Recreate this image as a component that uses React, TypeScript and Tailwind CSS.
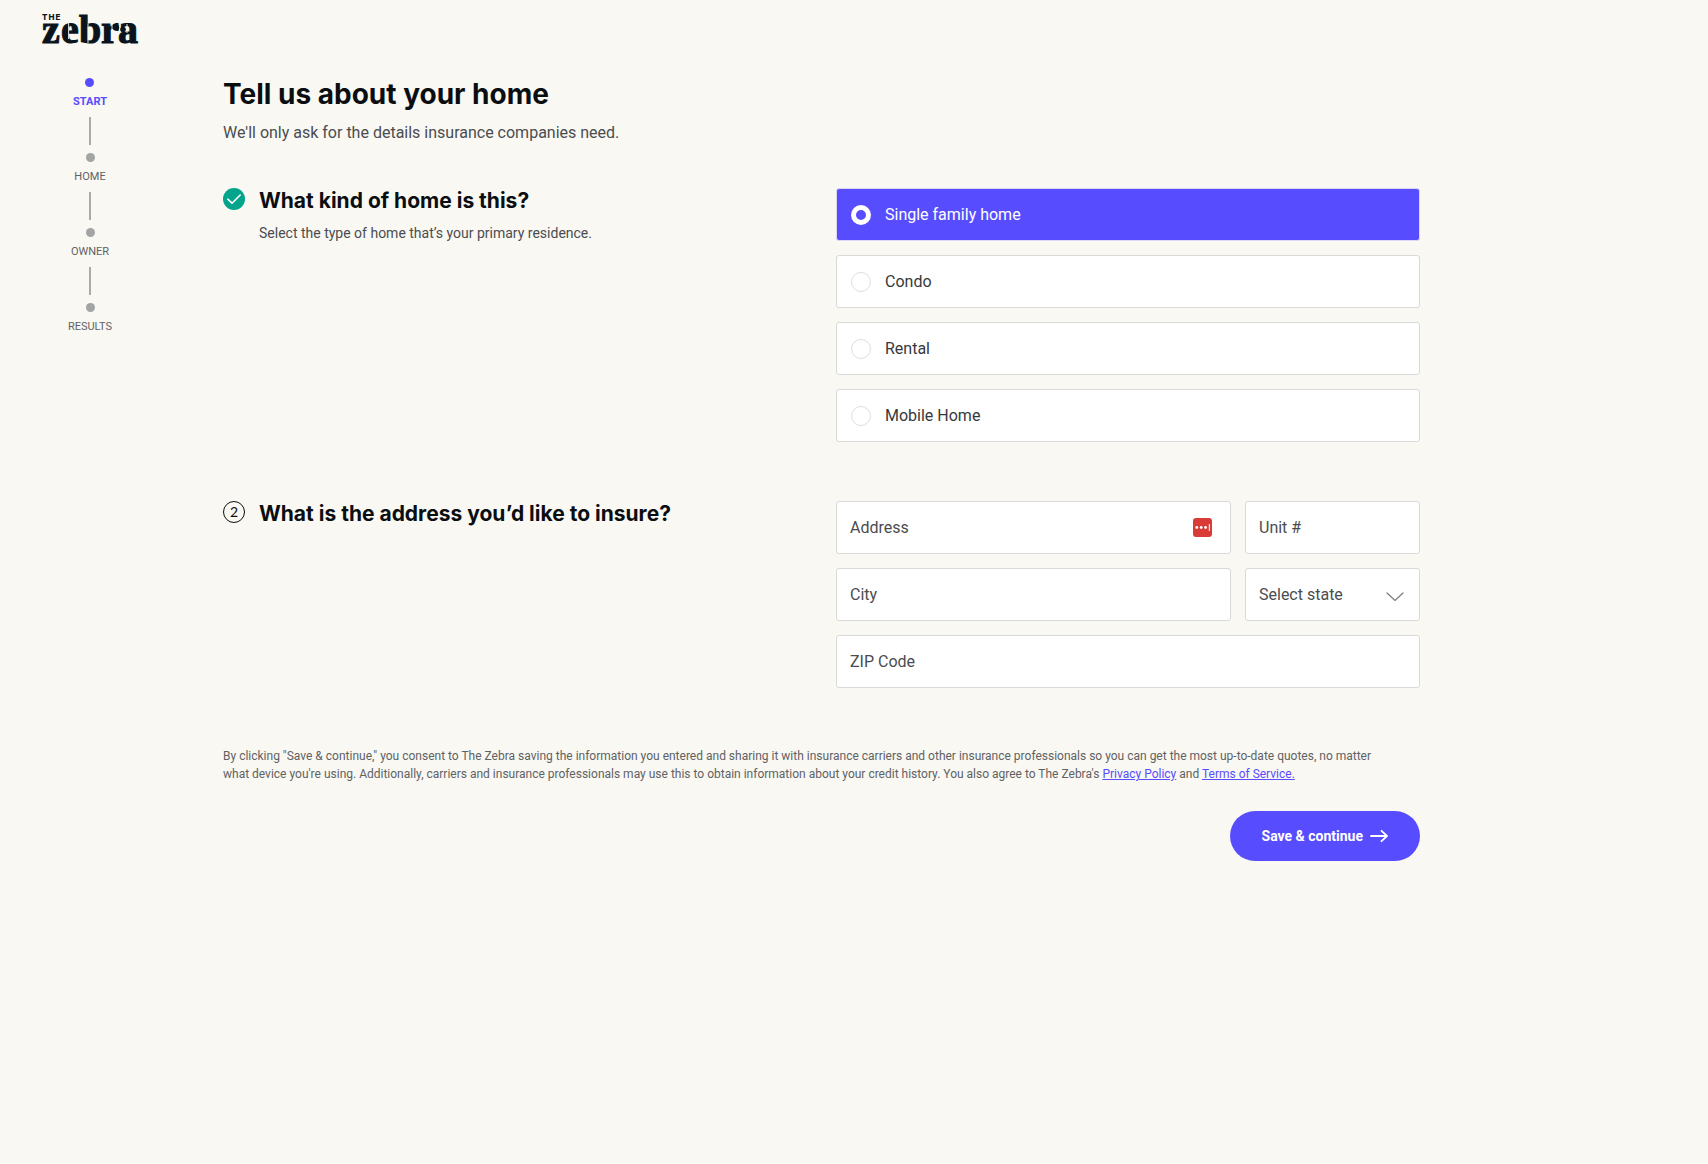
import React, { useState } from 'react';

const steps = ['Start', 'Home', 'Owner', 'Results'];

const homeTypes = ['Single family home', 'Condo', 'Rental', 'Mobile Home'];

const fieldClass =
  'h-[53px] w-full rounded-[3px] border border-[#d9dad8] bg-white px-[13px] text-base text-[#4a4d50] placeholder:text-[#4a4d50] placeholder:opacity-100 focus:outline-none focus:border-[#574dff]';

const Logo: React.FC = () => (
  <svg
    width="98"
    height="34"
    viewBox="0 0 98 34"
    role="img"
    aria-label="The Zebra"
    fill="#0b141c"
    className="overflow-visible"
  >
    <text x="1" y="8" fontFamily="Inter, sans-serif" fontWeight="800" fontSize="8" letterSpacing="1">
      THE
    </text>
    <text
      x="1 20 38 60 77"
      y="31"
      fontFamily="'Liberation Serif', serif"
      fontWeight="700"
      fontSize="40"
      stroke="#0b141c"
      strokeWidth="1.1"
    >
      zebra
    </text>
    <circle cx="75" cy="15.5" r="3.2" />
    <circle cx="82" cy="17.5" r="2.8" />
    <g stroke="#f9f8f3" strokeWidth="0.9">
      <path d="M27.6 11 V27" />
      <path d="M47 12 V31" />
      <path d="M71 12 V20" />
      <path d="M86 12 V21" />
    </g>
  </svg>
);

const Stepper: React.FC = () => (
  <nav aria-label="Progress" className="w-[180px] shrink-0 pt-[18px]">
    <ol className="flex flex-col items-center gap-2">
      {steps.map((step, i) => (
        <li key={step} className="flex flex-col items-center gap-2">
          {i > 0 && <span className="h-7 w-[2px] bg-[#a9abab]" />}
          <span className={`size-[9px] rounded-full ${i === 0 ? 'bg-[#574dff]' : 'bg-[#a3a5a5]'}`} />
          <span
            className={`text-[11px] leading-[14px] uppercase ${
              i === 0 ? 'font-bold text-[#574dff]' : 'text-[#5f6264]'
            }`}
          >
            {step}
          </span>
        </li>
      ))}
    </ol>
  </nav>
);

const CheckBadge: React.FC = () => (
  <svg width="22" height="22" viewBox="0 0 22 22" className="shrink-0" aria-hidden="true">
    <circle cx="11" cy="11" r="11" fill="#02a58b" />
    <path
      d="M4.8 11.2 L9 15.2 L17.2 7"
      fill="none"
      stroke="#fff"
      strokeWidth="1.6"
      strokeLinecap="round"
      strokeLinejoin="round"
    />
  </svg>
);

type QuestionProps = {
  badge: React.ReactNode;
  title: string;
  hint?: string;
  children: React.ReactNode;
};

const Question: React.FC<QuestionProps> = ({ badge, title, hint, children }) => (
  <section className="mb-[59px] grid gap-y-6 lg:grid-cols-[minmax(0,613fr)_minmax(0,584fr)]">
    <div className="flex items-start gap-[14px]">
      {badge}
      <div>
        <h2 className="font-['Inter',sans-serif] text-[21px] leading-[26px] font-bold text-[#0b0e11]">{title}</h2>
        {hint && <p className="mt-2 text-sm leading-[22px] text-[#4a4d50]">{hint}</p>}
      </div>
    </div>
    {children}
  </section>
);

const App: React.FC = () => {
  const [homeType, setHomeType] = useState(homeTypes[0]);

  return (
    <div className="min-h-screen bg-[#f9f8f3] font-['Roboto',sans-serif] text-[#4a4d50]">
      <header className="flex h-[60px] items-start px-[41px] pt-3">
        <a href="#">
          <Logo />
        </a>
      </header>

      <div className="flex">
        <Stepper />

        <main className="ml-[43px] mr-6 w-full max-w-[1197px] pt-4">
          <h1 className="font-['Inter',sans-serif] text-[28px] leading-9 font-bold text-[#0b0e11]">
            Tell us about your home
          </h1>
          <p className="mt-2 mb-[42px] text-base leading-[26px]">
            We'll only ask for the details insurance companies need.
          </p>

          <form onSubmit={(e) => e.preventDefault()}>
            <Question
              badge={<CheckBadge />}
              title="What kind of home is this?"
              hint="Select the type of home that’s your primary residence."
            >
              <div className="flex flex-col gap-[14px]">
                {homeTypes.map((type) => {
                  const selected = type === homeType;
                  return (
                    <label
                      key={type}
                      className={`flex h-[53px] cursor-pointer items-center gap-[14px] rounded-[3px] border px-[14px] text-base ${
                        selected
                          ? 'border-[#dad8f5] bg-[#574dff] text-white'
                          : 'border-[#d9dad8] bg-white text-[#36393c]'
                      }`}
                    >
                      <input
                        type="radio"
                        name="homeType"
                        value={type}
                        checked={selected}
                        onChange={() => setHomeType(type)}
                        className="size-5 appearance-none rounded-full border border-[#dedede] checked:border-5 checked:border-white"
                      />
                      {type}
                    </label>
                  );
                })}
              </div>
            </Question>

            <Question
              badge={
                <span className="flex size-[22px] shrink-0 items-center justify-center rounded-full border border-[#0b0e11] font-['Lato',sans-serif] text-sm text-[#0b0e11]">
                  2
                </span>
              }
              title="What is the address you’d like to insure?"
            >
              <div className="grid grid-cols-[minmax(0,1fr)_175px] gap-[14px]">
                <div className="relative">
                  <input type="text" aria-label="Address" placeholder="Address" className={fieldClass} />
                  <svg
                    width="19"
                    height="19"
                    viewBox="0 0 19 19"
                    className="absolute top-[17px] right-[19px]"
                    aria-hidden="true"
                  >
                    <rect width="19" height="19" rx="3" fill="#d93b37" />
                    <circle cx="3.8" cy="9.5" r="1.4" fill="#fff" />
                    <circle cx="8.2" cy="9.5" r="1.4" fill="#fff" />
                    <circle cx="12.6" cy="9.5" r="1.4" fill="#fff" />
                    <path d="M16.3 6 V13" stroke="#fff" strokeWidth="1" />
                  </svg>
                </div>
                <input type="text" aria-label="Unit number" placeholder="Unit #" className={fieldClass} />
                <input type="text" aria-label="City" placeholder="City" className={fieldClass} />
                <div className="relative">
                  <select aria-label="State" defaultValue="" className={`${fieldClass} appearance-none`}>
                    <option value="">Select state</option>
                    <option value="AZ">Arizona</option>
                    <option value="CA">California</option>
                    <option value="TX">Texas</option>
                  </select>
                  <svg
                    width="18"
                    height="10"
                    viewBox="0 0 18 10"
                    className="pointer-events-none absolute top-6 right-4"
                    aria-hidden="true"
                  >
                    <path d="M1 1 L9 8.5 L17 1" fill="none" stroke="#77797b" strokeWidth="1.2" strokeLinecap="round" />
                  </svg>
                </div>
                <input
                  type="text"
                  aria-label="ZIP Code"
                  placeholder="ZIP Code"
                  className={`${fieldClass} col-span-2`}
                />
              </div>
            </Question>

            <p className="pr-8 text-xs leading-[18px] text-[#5f6264]">
              By clicking "Save & continue," you consent to The Zebra saving the information you entered and sharing it
              with insurance carriers and other insurance professionals so you can get the most up-to-date quotes, no
              matter what device you're using. Additionally, carriers and insurance professionals may use this to obtain
              information about your credit history. You also agree to The Zebra's{' '}
              <a href="#" className="text-[#574dff] underline">
                Privacy Policy
              </a>{' '}
              and{' '}
              <a href="#" className="text-[#574dff] underline">
                Terms of Service.
              </a>
            </p>

            <div className="mt-7 flex justify-end">
              <button
                type="submit"
                className="flex h-[50px] items-center gap-[7px] rounded-full bg-[#574dff] px-8 text-sm font-bold text-white"
              >
                Save & continue
                <svg width="18" height="14" viewBox="0 0 18 14" fill="none" aria-hidden="true">
                  <path
                    d="M1 7 H17 M11.5 1.8 L17 7 L11.5 12.2"
                    stroke="#fff"
                    strokeWidth="1.8"
                    strokeLinecap="round"
                    strokeLinejoin="round"
                  />
                </svg>
              </button>
            </div>
          </form>
        </main>
      </div>
    </div>
  );
};

export default App;
